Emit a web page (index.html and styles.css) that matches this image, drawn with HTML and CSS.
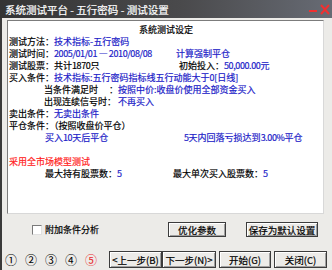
FILE: index.html
```html
<!DOCTYPE html>
<html lang="zh-CN">
<head>
  <meta charset="UTF-8" />
  <title>测试设置</title>
  <link rel="stylesheet" href="styles.css">
</head>
<body>
  <div class="window">
    <div class="titlebar">
      <span class="title">系统测试平台 - 五行密码 - 测试设置</span>
      <span class="ctrls">
        <svg width="22" height="11" viewBox="0 0 22 11">
          <rect x="0" y="6" width="8" height="2" fill="#f03030"/>
          <path d="M12 1 L20 10 M20 1 L12 10" stroke="#f03030" stroke-width="2"/>
        </svg>
      </span>
    </div>

    <div class="body">
      <div class="panel">
        <div class="heading">系统测试设定</div>
        <div class="row">测试方法：<span class="blue">技术指标-五行密码</span></div>
        <div class="row split s1"><span>测试时间：<span class="blue num">2005/01/01 — 2010/08/08</span></span><span class="blue">计算强制平仓</span></div>
        <div class="row split s2"><span>测试股票：共计<span class="num">1870</span>只</span><span>初始投入：<span class="blue num">50,000.00</span><span class="blue">元</span></span></div>
        <div class="row">买入条件：<span class="blue">技术指标:五行密码指标线五行动能大于<span class="num">0</span>[日线]</span></div>
        <div class="row sub"><span class="lbl"><span>当条件满足时</span><span>：</span></span><span class="blue">按照中价:收盘价使用全部资金买入</span></div>
        <div class="row sub"><span class="lbl">出现连续信号时：</span><span class="blue">不再买入</span></div>
        <div class="row">卖出条件：<span class="blue">无卖出条件</span></div>
        <div class="row">平仓条件：（按照收盘价平仓）</div>
        <div class="row split s3"><span class="blue indent">买入<span class="num">10</span>天后平仓</span><span class="blue"><span class="num">5</span>天内回落亏损达到<span class="num">3.00%</span>平仓</span></div>
        <div class="row"></div>
        <div class="row red">采用全市场模型测试</div>
        <div class="row split s4"><span class="indent">最大持有股票数：<span class="blue num">5</span></span><span>最大单次买入股票数：<span class="blue num">5</span></span></div>
      </div>

      <div class="options">
        <label class="check"><span class="box"></span>附加条件分析</label>
        <button class="btn opt">优化参数</button>
        <button class="btn save">保存为默认设置</button>
      </div>

      <div class="footer">
        <div class="steps">
          <span>①</span><span>②</span><span>③</span><span>④</span><span class="cur">⑤</span>
        </div>
        <div class="nav">
          <button class="btn w53">&lt;上一步(B)</button>
          <button class="btn w54">下一步(N)&gt;</button>
          <button class="btn w52 gap">开始(G)</button>
          <button class="btn w53 gap">关闭(C)</button>
        </div>
      </div>
    </div>
  </div>
</body>
</html>
```

FILE: styles.css
```css
body {
  margin: 0;
  font-family: "Noto Sans CJK SC", "Liberation Sans", sans-serif;
  font-size: 9px;
  color: #000;
  background: #ecebe8;
  -webkit-text-stroke: 0.2px;
}

.window {
  width: 332px;
  height: 270px;
  display: flex;
  flex-direction: column;
  background: #ecebe8;
  overflow: hidden;
}

.titlebar {
  height: 18px;
  display: flex;
  align-items: center;
  justify-content: space-between;
  background: linear-gradient(to right, #343434, #4a4a4c 55%, #676b74);
  color: #fff;
  padding: 0 1px 0 5px;
}

.title {
  font-size: 10.5px;
}

.ctrls svg {
  display: block;
  margin-top: 1px;
}

.body {
  flex: 1;
  border-left: 2px solid #3a3a3a;
  padding: 2px 8px 0 5px;
}

.panel {
  height: 189px;
  background: #fff;
  border-top: 1px solid #7c7c7c;
  border-left: 1px solid #7c7c7c;
  border-right: 1px solid #d8d8d8;
  border-bottom: 1px solid #d8d8d8;
  padding: 3px 0 0 1px;
}

.heading {
  text-align: center;
  line-height: 12px;
}

.row {
  height: 12px;
  line-height: 12px;
  white-space: nowrap;
}

.num {
  letter-spacing: -0.4px;
}

.blue {
  color: #1e1ec8;
}

.red {
  color: #ff1e1e;
}

.indent {
  padding-left: 36px;
}

.split {
  display: grid;
}

.s1 { grid-template-columns: 167px auto; }
.s2 { grid-template-columns: 170px auto; }
.s3 { grid-template-columns: 175px auto; }
.s4 { grid-template-columns: 164px auto; }

.sub {
  display: flex;
  padding-left: 35px;
}

.lbl {
  width: 74px;
  display: flex;
  justify-content: space-between;
}

.options {
  display: flex;
  align-items: center;
  height: 15px;
  margin-top: 8px;
}

.check {
  display: flex;
  align-items: center;
  margin-left: 25px;
}

.box {
  width: 8px;
  height: 8px;
  background: #fff;
  border-top: 1px solid #7a7a7a;
  border-left: 1px solid #7a7a7a;
  border-right: 1px solid #e0e0e0;
  border-bottom: 1px solid #e0e0e0;
  margin-right: 3px;
}

.btn {
  font-family: inherit;
  font-size: 9.5px;
  height: 15px;
  padding: 0;
  background: #ecebe8;
  border: 1px solid #3c3c3c;
  box-shadow: inset 1px 1px #fff, inset -1px -1px #a0a0a0;
  color: #000;
  line-height: 12px;
}

.opt {
  width: 58px;
  margin-left: auto;
}

.save {
  width: 72px;
  margin-left: 20px;
  margin-right: 6px;
}

.footer {
  display: flex;
  align-items: center;
  justify-content: space-between;
  margin: 14px -3px 0 -4px;
  height: 17px;
}

.steps {
  display: flex;
  gap: 8px;
  font-size: 12px;
  padding-left: 2px;
  -webkit-text-stroke: 0;
}

.steps .cur {
  color: #e8282d;
}

.nav {
  display: flex;
}

.nav .btn {
  height: 17px;
}

.w52 { width: 52px; }
.w53 { width: 53px; }
.w54 { width: 54px; }

.gap {
  margin-left: 3px;
}
```
